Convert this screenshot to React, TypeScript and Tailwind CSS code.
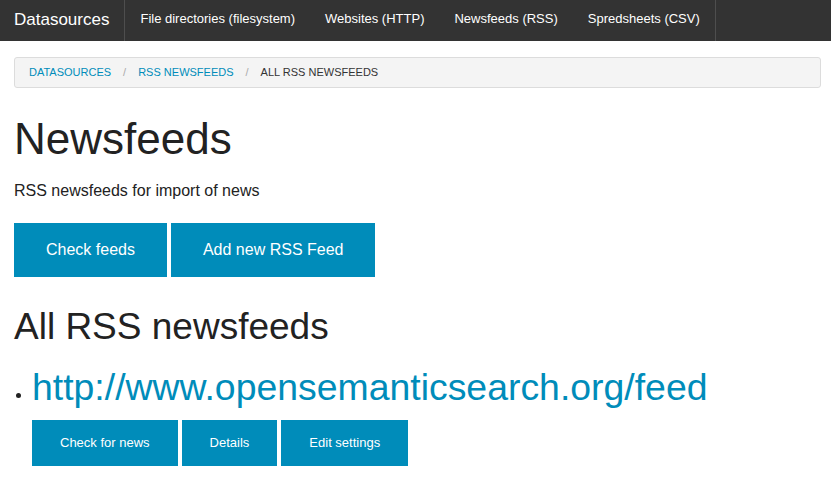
import React from 'react';

const navItems = [
  'File directories (filesystem)',
  'Websites (HTTP)',
  'Newsfeeds (RSS)',
  'Spredsheets (CSV)',
];

const crumbs = ['Datasources', 'RSS newsfeeds'];

export default function App() {
  return (
    <div className="min-h-screen bg-white text-[#222222] font-['Liberation_Sans',Arial,sans-serif]">
      {/* Top bar */}
      <nav className="flex h-[41px] bg-[#333333] text-white">
        <div className="pl-[14px] pr-[15px] text-[17px] leading-[39px] border-r border-[#4e4e4e]">
          Datasources
        </div>
        <ul className="flex border-r border-[#4e4e4e]">
          {navItems.map((item) => (
            <li key={item} className="px-[15px] text-[13px] leading-[38px]">
              {item}
            </li>
          ))}
        </ul>
      </nav>

      {/* Breadcrumbs */}
      <div className="mt-4 ml-[14px] mr-[10px] flex items-center px-[14px] h-[31px] bg-[#f4f4f4] border border-[#dcdcdc] rounded-[3px] text-[11px] uppercase">
        {crumbs.map((c) => (
          <React.Fragment key={c}>
            <a className="text-[#008cba]">{c}</a>
            <span className="mx-3 text-[#aaaaaa]">/</span>
          </React.Fragment>
        ))}
        <span className="text-[#333333]">All RSS newsfeeds</span>
      </div>

      <div className="px-[14px]">
        <h1 className="mt-5 mb-2 text-[44px] leading-[1.4]">Newsfeeds</h1>
        <p className="mb-5 text-base leading-[1.6]">RSS newsfeeds for import of news</p>

        <div className="flex gap-1">
          <button className="h-[54px] px-8 bg-[#008cba] text-white text-base">Check feeds</button>
          <button className="h-[54px] px-8 bg-[#008cba] text-white text-base">Add new RSS Feed</button>
        </div>

        <h2 className="mt-6 mb-2 text-[37px] leading-[1.4]">All RSS newsfeeds</h2>

        <ul className="ml-[18px] list-disc text-base leading-[1.6]">
          <li>
            <a className="text-[37.4px] leading-[1.4] text-[#008cba]">
              http://www.opensemanticsearch.org/feed
            </a>
            <div className="mt-[7px] flex gap-1">
              <button className="h-[46px] px-7 bg-[#008cba] text-white text-[13px]">Check for news</button>
              <button className="h-[46px] px-7 bg-[#008cba] text-white text-[13px]">Details</button>
              <button className="h-[46px] px-7 bg-[#008cba] text-white text-[13px]">Edit settings</button>
            </div>
          </li>
        </ul>
      </div>
    </div>
  );
}
